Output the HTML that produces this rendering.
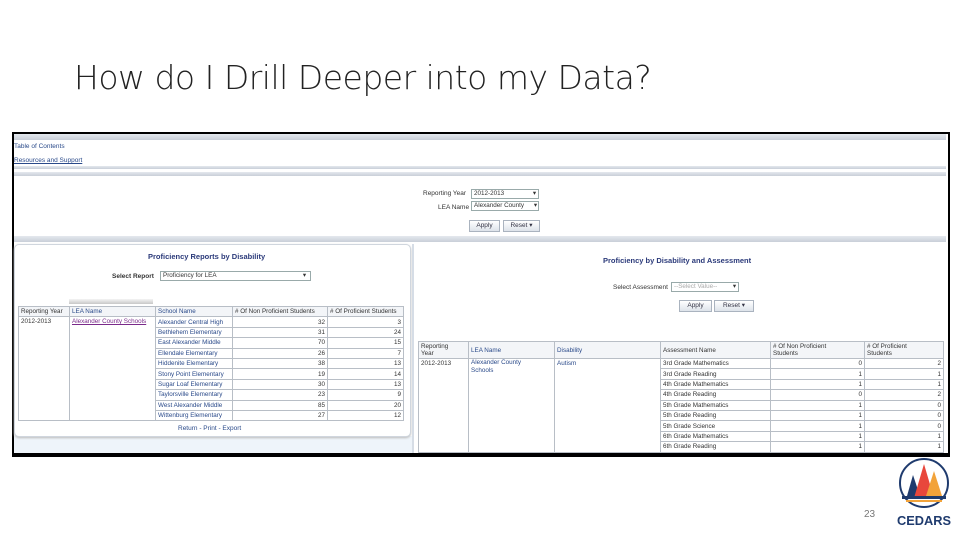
<!DOCTYPE html>
<html><head><meta charset="utf-8"><style>
body{margin:0;width:960px;height:540px;background:#fff;position:relative;overflow:hidden;font-family:"Liberation Sans",sans-serif}
.a{position:absolute}
.t{font-size:6.5px;color:#333;white-space:nowrap}
.l{color:#2a4a8a}
.bar{position:absolute;left:14px;width:932px;height:6px;background:linear-gradient(#e4e8ee,#c9cfd8)}
table{position:absolute;border-collapse:collapse;font-size:6.3px;color:#333;table-layout:fixed}
td{border:1px solid #b8bec6;padding:0 2px;height:9.4px;line-height:9px;white-space:nowrap;overflow:hidden}
td.r{text-align:right}
.hd td{background:#f3f5f8}
.btn{position:absolute;height:10px;font-size:6.5px;line-height:10px;text-align:center;background:linear-gradient(#fff,#dde3ea);border:1px solid #aab3bf;color:#334}
.sel{position:absolute;height:8px;border:1px solid #9aa;background:#fff;font-size:6.3px;line-height:8px;color:#333;padding-left:2px}
</style></head><body>
<div class="a" style="left:74px;top:58px;font-size:33px;color:#222;font-family:'DejaVu Sans','Liberation Sans',sans-serif;font-weight:200;letter-spacing:-0.5px">How do I Drill Deeper into my Data?</div>

<div class="a" style="left:12px;top:132px;width:934px;height:321px;border:2px solid #000;background:#fff;overflow:hidden"></div>
<div class="a" style="left:14px;top:436px;width:400px;height:17px;background:#eef4fa"></div>
<div class="bar" style="top:134px"></div>
<div class="a t l" style="left:14px;top:143px">Table of Contents</div>
<div class="a t l" style="left:14px;top:157px;text-decoration:underline">Resources and Support</div>
<div class="bar" style="top:166px;height:3px"></div>
<div class="bar" style="top:172px;height:4px"></div>
<div class="a t" style="left:423px;top:190px">Reporting Year</div>
<div class="sel" style="left:471px;top:189px;width:64px">2012-2013 <span style="float:right;margin-right:2px">▾</span></div>
<div class="a t" style="left:438px;top:204px">LEA Name</div>
<div class="sel" style="left:471px;top:201px;width:64px">Alexander County<span style="float:right;margin-right:1px">▾</span></div>
<div class="btn" style="left:469px;top:220px;width:29px">Apply</div>
<div class="btn" style="left:503px;top:220px;width:35px">Reset ▾</div>
<div class="bar" style="top:236px;height:6px"></div>

<div class="a" style="left:14px;top:244px;width:395px;height:191px;border:1px solid #d0d6de;border-radius:5px;background:#fff;box-shadow:0 1px 2px #bbb"></div>
<div class="a" style="left:148px;top:252px;font-size:7.5px;font-weight:bold;color:#2b3a7a">Proficiency Reports by Disability</div>
<div class="a t" style="left:112px;top:273px;font-weight:bold">Select Report</div>
<div class="sel" style="left:160px;top:271px;width:147px">Proficiency for LEA<span style="float:right;margin-right:4px">▾</span></div>
<div class="a" style="left:69px;top:299px;width:84px;height:5px;background:linear-gradient(#f4f4f4,#c8c8c8)"></div>
<table style="left:18px;top:306px;width:386px">
<colgroup><col style="width:51px"><col style="width:86px"><col style="width:77px"><col style="width:95px"><col></colgroup>
<tr class="hd"><td>Reporting Year</td><td class="l">LEA Name</td><td class="l">School Name</td><td>#&nbsp;Of Non Proficient Students</td><td>#&nbsp;Of Proficient Students</td></tr>
<tr><td rowspan="10" style="vertical-align:top">2012-2013</td><td rowspan="10" style="vertical-align:top;color:#7a2a8a;text-decoration:underline">Alexander County Schools</td><td class="l">Alexander Central High</td><td class="r">32</td><td class="r">3</td></tr>
<tr><td class="l">Bethlehem Elementary</td><td class="r">31</td><td class="r">24</td></tr>
<tr><td class="l">East Alexander Middle</td><td class="r">70</td><td class="r">15</td></tr>
<tr><td class="l">Ellendale Elementary</td><td class="r">26</td><td class="r">7</td></tr>
<tr><td class="l">Hiddenite Elementary</td><td class="r">38</td><td class="r">13</td></tr>
<tr><td class="l">Stony Point Elementary</td><td class="r">19</td><td class="r">14</td></tr>
<tr><td class="l">Sugar Loaf Elementary</td><td class="r">30</td><td class="r">13</td></tr>
<tr><td class="l">Taylorsville Elementary</td><td class="r">23</td><td class="r">9</td></tr>
<tr><td class="l">West Alexander Middle</td><td class="r">85</td><td class="r">20</td></tr>
<tr><td class="l">Wittenburg Elementary</td><td class="r">27</td><td class="r">12</td></tr>
</table>
<div class="a t l" style="left:178px;top:425px">Return - Print - Export</div>

<div class="a" style="left:412px;top:244px;width:534px;height:209px;border-left:2px solid #d6dde6;background:#fff"></div>
<div class="a" style="left:603px;top:256px;font-size:7.5px;font-weight:bold;color:#2b3a7a">Proficiency by Disability and Assessment</div>
<div class="a t" style="left:613px;top:284px">Select Assessment</div>
<div class="sel" style="left:671px;top:282px;width:64px;color:#aaa">--Select Value--<span style="float:right;margin-right:2px;color:#333">▾</span></div>
<div class="btn" style="left:679px;top:300px;width:31px">Apply</div>
<div class="btn" style="left:714px;top:300px;width:38px">Reset ▾</div>
<table style="left:418px;top:341px;width:526px">
<colgroup><col style="width:50px"><col style="width:86px"><col style="width:106px"><col style="width:110px"><col style="width:94px"><col></colgroup>
<tr class="hd"><td style="height:16px;line-height:7px">Reporting<br>Year</td><td class="l">LEA Name</td><td class="l">Disability</td><td>Assessment Name</td><td style="line-height:7px">#&nbsp;Of Non Proficient<br>Students</td><td style="line-height:7px">#&nbsp;Of Proficient<br>Students</td></tr>
<tr><td rowspan="9" style="vertical-align:top">2012-2013</td><td rowspan="9" class="l" style="vertical-align:top;line-height:8px">Alexander County<br>Schools</td><td rowspan="9" class="l" style="vertical-align:top">Autism</td><td>3rd Grade Mathematics</td><td class="r">0</td><td class="r">2</td></tr>
<tr><td>3rd Grade Reading</td><td class="r">1</td><td class="r">1</td></tr>
<tr><td>4th Grade Mathematics</td><td class="r">1</td><td class="r">1</td></tr>
<tr><td>4th Grade Reading</td><td class="r">0</td><td class="r">2</td></tr>
<tr><td>5th Grade Mathematics</td><td class="r">1</td><td class="r">0</td></tr>
<tr><td>5th Grade Reading</td><td class="r">1</td><td class="r">0</td></tr>
<tr><td>5th Grade Science</td><td class="r">1</td><td class="r">0</td></tr>
<tr><td>6th Grade Mathematics</td><td class="r">1</td><td class="r">1</td></tr>
<tr><td>6th Grade Reading</td><td class="r">1</td><td class="r">1</td></tr>
</table>
<div class="a" style="left:12px;top:453px;width:938px;height:2px;background:#000"></div>

<div class="a" style="left:864px;top:509px;font-size:10px;color:#777">23</div>
<svg class="a" style="left:896px;top:458px" width="60" height="72" viewBox="0 0 60 72">
<circle cx="28" cy="25" r="24" fill="#fff" stroke="#1f3b6e" stroke-width="2"/>
<polygon points="11,38 17,17 24,38" fill="#1f3b6e"/>
<polygon points="18,40 28,6 38,40" fill="#e8473c"/>
<polygon points="30,38 38,13 46,38" fill="#f2a33a"/>
<rect x="6" y="38" width="44" height="3" fill="#1f3b6e"/>
<rect x="10" y="42" width="36" height="2" fill="#f2a33a"/>
<text x="28" y="67" font-family="Liberation Sans" font-weight="bold" font-size="13" fill="#1f3b6e" text-anchor="middle" textLength="54" lengthAdjust="spacingAndGlyphs">CEDARS</text>
</svg>
</body></html>
